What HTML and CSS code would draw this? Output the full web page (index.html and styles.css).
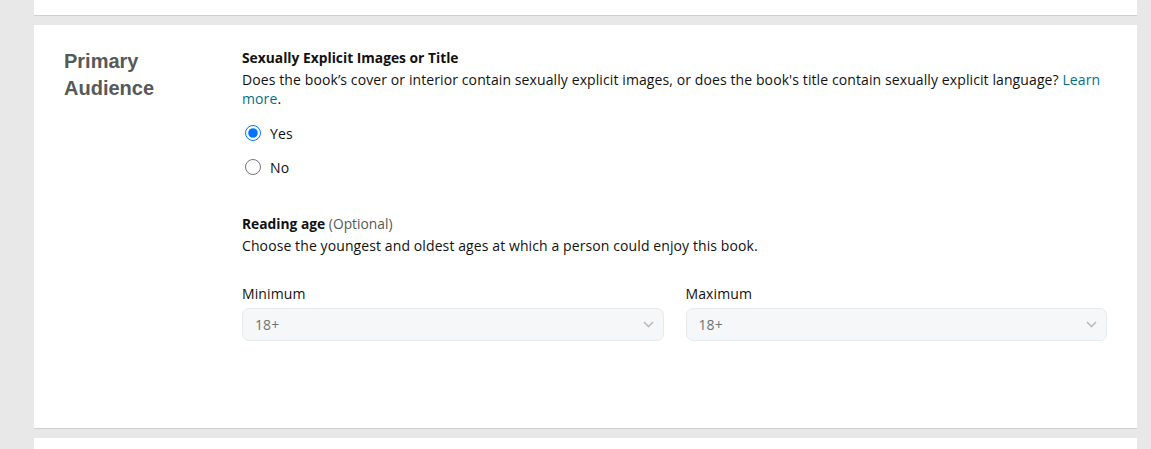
FILE: index.html
```html
<!DOCTYPE html>
<html lang="en">
<head>
<meta charset="utf-8">
<title>Primary Audience</title>
<link rel="stylesheet" href="styles.css">
</head>
<body>
<div class="page">
  <div class="card card-prev"></div>
  <section class="card card-main">
    <h2 class="section-title">Primary<br>Audience</h2>
    <div class="section-body">
      <div class="field">
        <div class="label">Sexually Explicit Images or Title</div>
        <p class="desc">Does the book’s cover or interior contain sexually explicit images, or does the book's title contain sexually explicit language? <a href="#" class="link">Learn more</a>.</p>
        <div class="radios">
          <label class="radio"><input type="radio" name="explicit" checked><span>Yes</span></label>
          <label class="radio"><input type="radio" name="explicit"><span>No</span></label>
        </div>
      </div>
      <div class="field field-age">
        <div class="label">Reading age <span class="optional">(Optional)</span></div>
        <p class="desc">Choose the youngest and oldest ages at which a person could enjoy this book.</p>
        <div class="age-grid">
          <div class="age-col">
            <div class="sel-label">Minimum</div>
            <div class="select"><span>18+</span><svg class="chev" width="11" height="7" viewBox="0 0 11 7"><path d="M1 1l4.5 4.5L10 1" fill="none" stroke="#b9bcbe" stroke-width="1.6"/></svg></div>
          </div>
          <div class="age-col">
            <div class="sel-label">Maximum</div>
            <div class="select"><span>18+</span><svg class="chev" width="11" height="7" viewBox="0 0 11 7"><path d="M1 1l4.5 4.5L10 1" fill="none" stroke="#b9bcbe" stroke-width="1.6"/></svg></div>
          </div>
        </div>
      </div>
    </div>
  </section>
  <div class="card card-next"></div>
</div>
</body>
</html>
```

FILE: styles.css
```css
html, body {
  margin: 0;
  padding: 0;
  background: #e8e8e8;
  height: 100%;
  overflow: hidden;
}
body {
  font-family: "Open Sans", "Noto Sans", Arial, sans-serif;
  font-size: 14px;
  letter-spacing: 0.1px;
  color: #111;
}
.page {
  padding: 0 14px 0 34px;
  display: flex;
  flex-direction: column;
  gap: 9px;
  margin-top: -10px;
}
.card {
  background: #fff;
  border-bottom: 1px solid #cfcfcf;
}
.card-prev {
  height: 25px;
}
.card-main {
  height: 404px;
  box-sizing: border-box;
  padding: 23px 30px 0 30px;
  display: flex;
}
.card-next {
  height: 11px;
  border-bottom: none;
}
.section-title {
  margin: 0;
  width: 178px;
  flex: none;
  font-family: "Liberation Sans", Arial, sans-serif;
  font-size: 20px;
  line-height: 27px;
  font-weight: bold;
  letter-spacing: 0;
  color: #565959;
}
.section-body {
  flex: 1;
}
.label {
  font-weight: bold;
  line-height: 19px;
  letter-spacing: 0;
  font-size: 13.8px;
}
.optional {
  font-weight: normal;
  color: #565959;
}
.desc {
  margin: 3px 0 0 0;
  line-height: 19px;
}
.link {
  color: #007185;
  text-decoration: none;
}
.radios {
  margin-top: 15px;
  display: flex;
  flex-direction: column;
  gap: 14px;
}
.radio {
  display: flex;
  align-items: center;
  gap: 9px;
  height: 20px;
}
.radio input {
  margin: 0 0 0 3px;
  width: 16px;
  height: 16px;
}
.field-age {
  margin-top: 37px;
}
.age-grid {
  margin-top: 29px;
  display: grid;
  grid-template-columns: 1fr 1fr;
  gap: 22px;
}
.sel-label {
  line-height: 19px;
  margin-bottom: 5px;
}
.select {
  height: 33px;
  box-sizing: border-box;
  background: #f5f7f8;
  border: 1px solid #e7eaec;
  border-radius: 7px;
  display: flex;
  align-items: center;
  justify-content: space-between;
  padding: 0 9px 0 12px;
  color: #6f7373;
}
```
